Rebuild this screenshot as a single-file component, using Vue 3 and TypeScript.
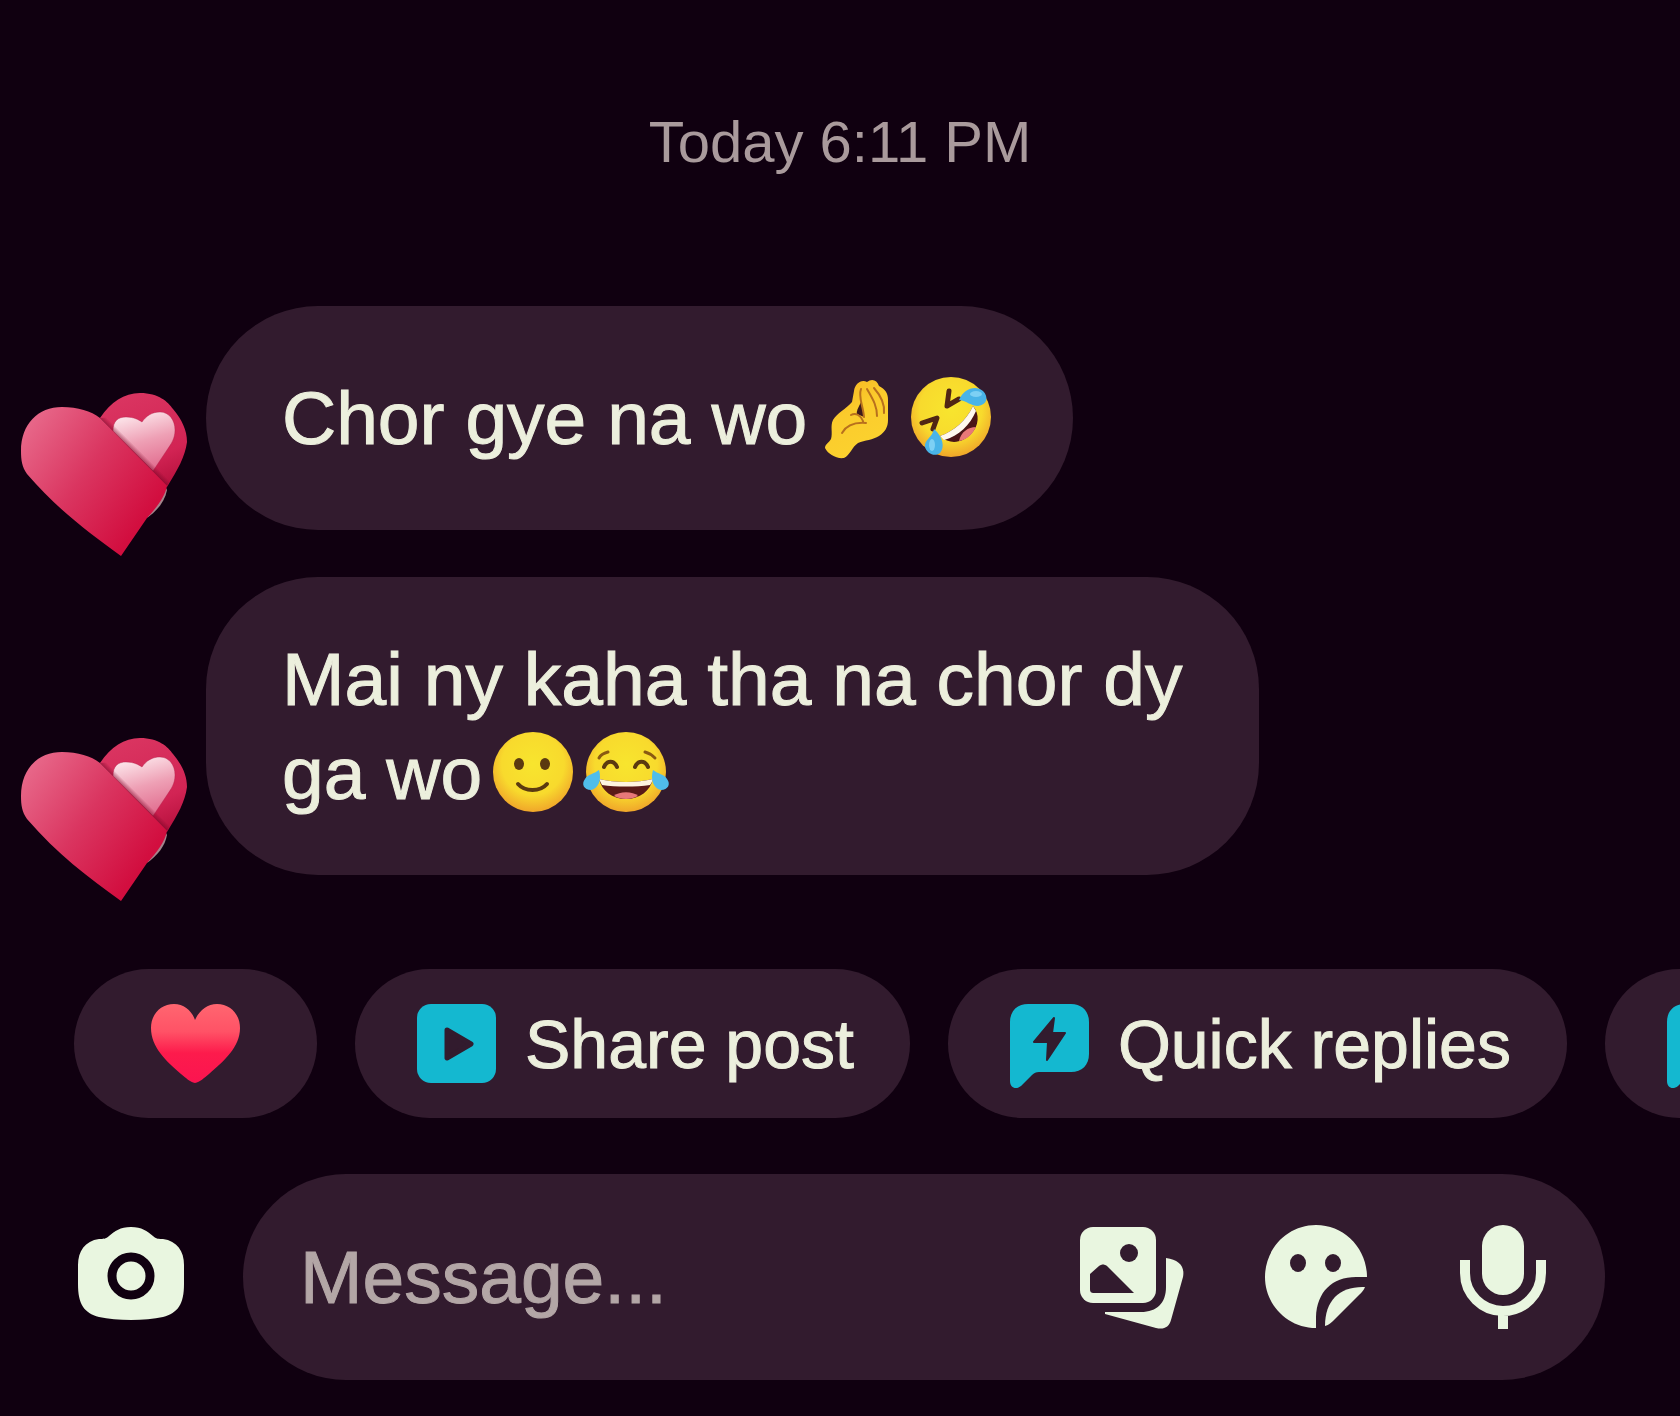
<script setup lang="ts">
import { ref } from 'vue'

type Emoji = 'pinch' | 'rofl' | 'smile' | 'joy'

interface Message {
  id: number
  text: string
  emojis: Emoji[]
}

interface Action {
  id: string
  label: string
  icon: 'heart' | 'play' | 'bolt'
  showLabel: boolean
}

const messages: Message[] = [
  { id: 1, text: 'Chor gye na wo', emojis: ['pinch', 'rofl'] },
  { id: 2, text: 'Mai ny kaha tha na chor dy ga wo', emojis: ['smile', 'joy'] },
]

const actions: Action[] = [
  { id: 'heart', label: 'Send heart', icon: 'heart', showLabel: false },
  { id: 'share', label: 'Share post', icon: 'play', showLabel: true },
  { id: 'quick', label: 'Quick replies', icon: 'bolt', showLabel: true },
  { id: 'more', label: 'More replies', icon: 'bolt', showLabel: false },
]

const draft = ref('')
</script>

<template>
  <main class="chat">
    <svg class="defs" aria-hidden="true">
      <defs>
        <linearGradient id="front" x1="0" y1="0.2" x2="0.8" y2="0.8">
          <stop offset="0" stop-color="#e76688" />
          <stop offset="0.5" stop-color="#da3560" />
          <stop offset="1" stop-color="#d20e3f" />
        </linearGradient>
        <linearGradient id="back" x1="0.3" y1="0" x2="0.7" y2="1">
          <stop offset="0" stop-color="#da3561" />
          <stop offset="0.7" stop-color="#d22454" />
          <stop offset="1" stop-color="#b9123f" />
        </linearGradient>
        <linearGradient id="small" x1="0.3" y1="0" x2="0.6" y2="1">
          <stop offset="0" stop-color="#fdeaee" />
          <stop offset="0.5" stop-color="#eea0b5" />
          <stop offset="1" stop-color="#e16c8e" />
        </linearGradient>
        <linearGradient id="fold" gradientUnits="userSpaceOnUse" x1="112" y1="60" x2="117" y2="55">
          <stop offset="0" stop-color="#7c0628" stop-opacity="0.75" />
          <stop offset="1" stop-color="#7c0628" stop-opacity="0" />
        </linearGradient>
        <linearGradient id="red" x1="0" y1="0" x2="0" y2="1">
          <stop offset="0" stop-color="#ff6670" />
          <stop offset="0.35" stop-color="#ff5266" />
          <stop offset="0.62" stop-color="#fd1b4c" />
          <stop offset="1" stop-color="#fb1450" />
        </linearGradient>
        <radialGradient id="face" cx="0.5" cy="0.4" r="0.6">
          <stop offset="0" stop-color="#f8e52e" />
          <stop offset="0.65" stop-color="#f8da2d" />
          <stop offset="1" stop-color="#f0a62a" />
        </radialGradient>
        <linearGradient id="skin" x1="0.2" y1="0" x2="0.7" y2="1">
          <stop offset="0" stop-color="#f5b522" />
          <stop offset="0.4" stop-color="#fbcb2c" />
          <stop offset="1" stop-color="#fbd32f" />
        </linearGradient>
      </defs>
    </svg>

    <time class="stamp">Today 6:11 PM</time>

    <section class="thread" aria-label="Messages">
      <article v-for="message in messages" :key="message.id" class="row">
        <svg class="avatar" viewBox="0 0 168 164" aria-hidden="true">
          <path d="M145 93 L127 125 C138 117 145 108 147 97Z" fill="#a5848c" />
          <path d="M80 25 C91 9 104 0 120 0 C139 0 148 9 153 16 C162 27 167 37 167 49 C165 64 158 76 147 94Z" fill="url(#back)" />
          <path d="M133 78 L93 38 C93 28 98 24 106 24 C114 24 119 27 122 29 C126 23 132 19 140 19 C149 19 155 27 155 37 C155 46 151 51 147 57Z" fill="url(#small)" stroke="#b21b46" stroke-opacity="0.4" />
          <path d="M80 25 L147 93 L153 82 L92 24Z" fill="url(#fold)" />
          <path d="M101 163 C68 139 37 116 7 81 C2 74 1 67 1 58 C1 31 18 14 42 14 C58 14 71 18 80 25 L147 93 C145 104 137 114 127 125Z" fill="url(#front)" />
        </svg>
        <p class="bubble">
          <span>{{ message.text }}<template v-for="emoji in message.emojis" :key="emoji"><svg v-if="emoji === 'pinch'" class="emoji" viewBox="0 0 93 94" role="img" aria-label="pinched fingers">
            <path d="M43 20 C44 13 50 8 56 11 C61 7 66 9 68 15 C74 18 77 22 77 29 V49 C77 56 74 61 68 65 C62 69 54 69 47 72 C41 76 39 84 33 87 C25 88 17 83 14 77 C14 73 18 72 20 68 C22 62 19 55 22 49 C26 42 35 38 41 31Z" fill="url(#skin)" />
            <path d="M50 31 C47 37 45 41 46 43 L53 46Z" fill="#3c1a1c" />
            <path d="M50 18 C47 26 52 34 53 46 M56 18 C61 27 66 34 66 45 M63 17 C70 25 74 33 73 42 M31 62 C35 55 42 51 55 52 M40 44 C45 41 50 45 52 50" fill="none" stroke="#b8701d" stroke-width="2" stroke-linecap="round" />
          </svg><svg v-else-if="emoji === 'rofl'" class="emoji" viewBox="0 0 93 94" role="img" aria-label="rolling on the floor laughing">
            <circle cx="47" cy="46" r="40" fill="url(#face)" />
            <path d="M45 20 L43 35 L55 28 M18 52 L33 47 L29 58" fill="none" stroke="#502514" stroke-width="5" stroke-linecap="round" stroke-linejoin="round" />
            <path d="M36 65 C50 60 62 50 69 35 C76 43 75 55 67 63 C59 71 47 75 36 65Z" fill="#4a1416" />
            <path d="M36 65 C50 60 62 50 69 35 L72 40 C66 54 55 65 40 69Z" fill="#fff8ee" />
            <path d="M55 70 C57 61 64 56 72 56 C68 64 62 69 55 70Z" fill="#e87878" />
            <path d="M55 29 C60 17 72 14 79 20 C85 26 83 34 74 35 C67 35 63 30 55 29Z" fill="#49b4e8" />
            <path d="M30 58 C39 66 41 76 36 82 C31 86 23 83 21 76 C20 69 28 67 30 58Z" fill="#49b4e8" />
            <ellipse cx="72" cy="23" rx="6" ry="3" fill="#7dd0f4" />
            <ellipse cx="28" cy="74" rx="3" ry="6" fill="#7dd0f4" />
          </svg><svg v-else-if="emoji === 'smile'" class="emoji" viewBox="0 0 93 94" role="img" aria-label="slightly smiling face">
            <circle cx="47" cy="46" r="40" fill="url(#face)" />
            <ellipse cx="33" cy="38" rx="5" ry="6" fill="#5b3a10" />
            <ellipse cx="59" cy="38" rx="5" ry="6" fill="#5b3a10" />
            <path d="M32 58 C39 66 54 66 61 58" fill="none" stroke="#5b3a10" stroke-width="4" stroke-linecap="round" />
          </svg><svg v-else class="emoji" viewBox="0 0 93 94" role="img" aria-label="face with tears of joy">
            <circle cx="47" cy="46" r="40" fill="url(#face)" />
            <path d="M20 32 C22 28 25 27 29 26 M66 26 C70 27 73 29 76 32" fill="none" stroke="#8a5a12" stroke-width="3" stroke-linecap="round" />
            <path d="M25 41 C28 34 35 34 38 41 M56 41 C59 34 66 34 69 41" fill="none" stroke="#5b3a10" stroke-width="4" stroke-linecap="round" />
            <path d="M20 53 C36 57 58 57 74 53 C71 65 61 73 47 73 C33 73 23 65 20 53Z" fill="#5a1a17" />
            <path d="M20 53 C36 57 58 57 74 53 C73 56 72 58 71 59 C57 61 37 61 23 59Z" fill="#fff4df" />
            <path d="M35 70 C40 65 54 65 59 70 C52 74 42 74 35 70Z" fill="#e87878" />
            <path d="M20 44 C23 54 19 63 12 64 C5 64 2 58 6 53 C9 48 15 48 20 44Z" fill="#50bdeb" />
            <path d="M74 44 C71 54 75 63 82 64 C89 64 92 58 88 53 C85 48 79 48 74 44Z" fill="#50bdeb" />
          </svg></template></span>
        </p>
      </article>
    </section>

    <nav class="actions" aria-label="Quick actions">
      <button
        v-for="action in actions"
        :key="action.id"
        type="button"
        class="chip"
        :class="{ 'chip-heart': action.icon === 'heart' }"
        :aria-label="action.label"
      >
        <svg v-if="action.icon === 'heart'" class="heart" viewBox="0 0 89 79" aria-hidden="true">
          <path d="M44 79 C39 78 35 74 30 70 C15 57 0 43 0 24 C0 10 10 0 23 0 C33 0 41 7 44 16 C48 7 56 0 66 0 C79 0 89 10 89 24 C89 43 73 57 58 70 C53 74 49 78 44 79Z" fill="url(#red)" />
        </svg>
        <svg v-else-if="action.icon === 'play'" class="glyph" viewBox="0 0 79 79" aria-hidden="true">
          <rect width="79" height="79" rx="14" fill="#14b8d0" />
          <path d="M30 26 L54 40 L30 54Z" fill="#321b2e" stroke="#321b2e" stroke-width="5" stroke-linejoin="round" />
        </svg>
        <svg v-else class="glyph" viewBox="0 0 79 79" aria-hidden="true">
          <path d="M18 0 H61 C72 0 79 7 79 18 V50 C79 61 72 68 61 68 H29 C26 68 24 69 22 71 L11 82 C6 86 0 84 0 77 V18 C0 7 7 0 18 0Z" fill="#14b8d0" />
          <path d="M44 14 L42 29 H55 L37 56 L38 38 H24Z" fill="#321b2e" stroke="#321b2e" stroke-width="2" stroke-linejoin="round" />
        </svg>
        <span v-if="action.showLabel">{{ action.label }}</span>
      </button>
    </nav>

    <form class="composer" @submit.prevent>
      <button type="button" class="icon-button camera" aria-label="Camera">
        <svg viewBox="0 0 108 100" aria-hidden="true">
          <path d="M54 0 C65 0 70 4 76 9 C79 12 82 12 86 12 C100 14 107 24 107 38 V57 C107 77 101 86 86 90 C68 94 40 94 22 90 C7 86 1 77 1 57 V38 C1 24 8 14 22 12 C26 12 29 12 32 9 C38 4 43 0 54 0Z" fill="#e9f6e0" />
          <circle cx="54" cy="49" r="19" fill="none" stroke="#100010" stroke-width="9" />
        </svg>
      </button>
      <div class="field">
        <input v-model="draft" type="text" aria-label="Message" placeholder="Message..." />
        <button type="button" class="icon-button" aria-label="Gallery">
          <svg viewBox="0 0 106 106" aria-hidden="true">
            <rect x="2" y="3" width="76" height="76" rx="13" fill="#e9f6e0" />
            <circle cx="51" cy="29" r="9" fill="#321b2e" />
            <path d="M12 50 L21 42 C24 40 26 40 29 42 L56 69 H16 C13 69 12 68 12 65Z" fill="#321b2e" />
            <path d="M88 34 C101 36 107 42 105 53 L93 96 C91 103 86 106 78 104 L27 90 V88 H63 C79 88 88 79 88 63Z" fill="#e9f6e0" />
          </svg>
        </button>
        <button type="button" class="icon-button" aria-label="Stickers">
          <svg viewBox="0 0 106 106" aria-hidden="true">
            <path d="M103 53 C103 24 80 1 52 1 C24 1 1 24 1 53 C1 81 24 104 52 104 V93 C53 68 68 53 92 53Z" fill="#e9f6e0" />
            <ellipse cx="34" cy="39" rx="8" ry="9" fill="#321b2e" />
            <ellipse cx="69" cy="39" rx="8" ry="9" fill="#321b2e" />
            <path d="M101 63 C76 62 61 76 61 102 C65 101 68 98 71 95 L95 71 C98 68 100 66 101 63Z" fill="#e9f6e0" />
          </svg>
        </button>
        <button type="button" class="icon-button" aria-label="Voice message">
          <svg viewBox="0 0 106 106" aria-hidden="true">
            <rect x="32" y="1" width="42" height="70" rx="21" fill="#e9f6e0" />
            <path d="M15 36 V49 A38 38 0 0 0 91 49 V36 M53 87 V105" fill="none" stroke="#e9f6e0" stroke-width="10" />
          </svg>
        </button>
      </div>
    </form>
  </main>
</template>

<style>
body {
  margin: 0;
  background: #100010;
}
</style>

<style scoped>
.chat {
  box-sizing: border-box;
  display: flex;
  flex-direction: column;
  min-height: 100vh;
  padding: 106px 0 36px;
  overflow: hidden;
  background: #100010;
  color: #ecefdd;
  font-family: "Liberation Sans", Arial, sans-serif;
}

.defs {
  position: absolute;
  width: 0;
  height: 0;
}

.stamp {
  color: #a99a9c;
  font-size: 58px;
  line-height: 72px;
  text-align: center;
}

.thread {
  display: flex;
  flex-direction: column;
  gap: 47px;
  margin-top: 128px;
  padding: 0 20px;
}

.row {
  display: flex;
  align-items: flex-end;
  gap: 18px;
}

.avatar {
  flex: none;
  width: 168px;
  height: 164px;
  margin-bottom: -27px;
}

.bubble {
  box-sizing: border-box;
  display: flex;
  align-items: center;
  min-height: 224px;
  max-width: 1053px;
  margin: 0;
  padding: 55px 76px;
  border-radius: 112px;
  background: #321b2e;
  font-size: 75px;
  line-height: 94px;
  -webkit-text-stroke: 1px currentColor;
}

.emoji {
  width: 93px;
  height: 94px;
  vertical-align: top;
  -webkit-text-stroke: 0;
}

.emoji:first-child {
  margin-left: 4px;
}

.actions {
  display: flex;
  gap: 38px;
  margin-top: 94px;
  padding-left: 74px;
}

.chip {
  display: flex;
  flex: none;
  align-items: center;
  gap: 29px;
  height: 149px;
  padding: 0 56px 0 62px;
  border: 0;
  border-radius: 75px;
  background: #321b2e;
  color: inherit;
  font: inherit;
  font-size: 68px;
  line-height: 84px;
  white-space: nowrap;
  -webkit-text-stroke: 1px currentColor;
}

.chip-heart {
  padding: 0 77px;
}

.heart {
  width: 89px;
  height: 79px;
}

.glyph {
  width: 79px;
  height: 79px;
  overflow: visible;
}

.composer {
  display: flex;
  align-items: center;
  gap: 58px;
  margin-top: 56px;
  padding: 0 75px 0 77px;
}

.icon-button {
  flex: none;
  width: 106px;
  height: 106px;
  padding: 0;
  border: 0;
  background: none;
}

.icon-button svg {
  display: block;
  width: 100%;
  height: 100%;
}

.camera {
  width: 108px;
  height: 100px;
}

.field {
  box-sizing: border-box;
  display: flex;
  flex: 1;
  align-items: center;
  gap: 80px;
  min-width: 0;
  height: 206px;
  padding: 0 49px 0 57px;
  border-radius: 103px;
  background: #321b2e;
}

.field input {
  flex: 1;
  min-width: 0;
  height: 94px;
  padding: 0;
  border: 0;
  outline: 0;
  background: none;
  color: inherit;
  font: inherit;
  font-size: 75px;
}

.field input::placeholder {
  color: #b3a6a6;
  opacity: 1;
  -webkit-text-stroke: 1px currentColor;
}
</style>
